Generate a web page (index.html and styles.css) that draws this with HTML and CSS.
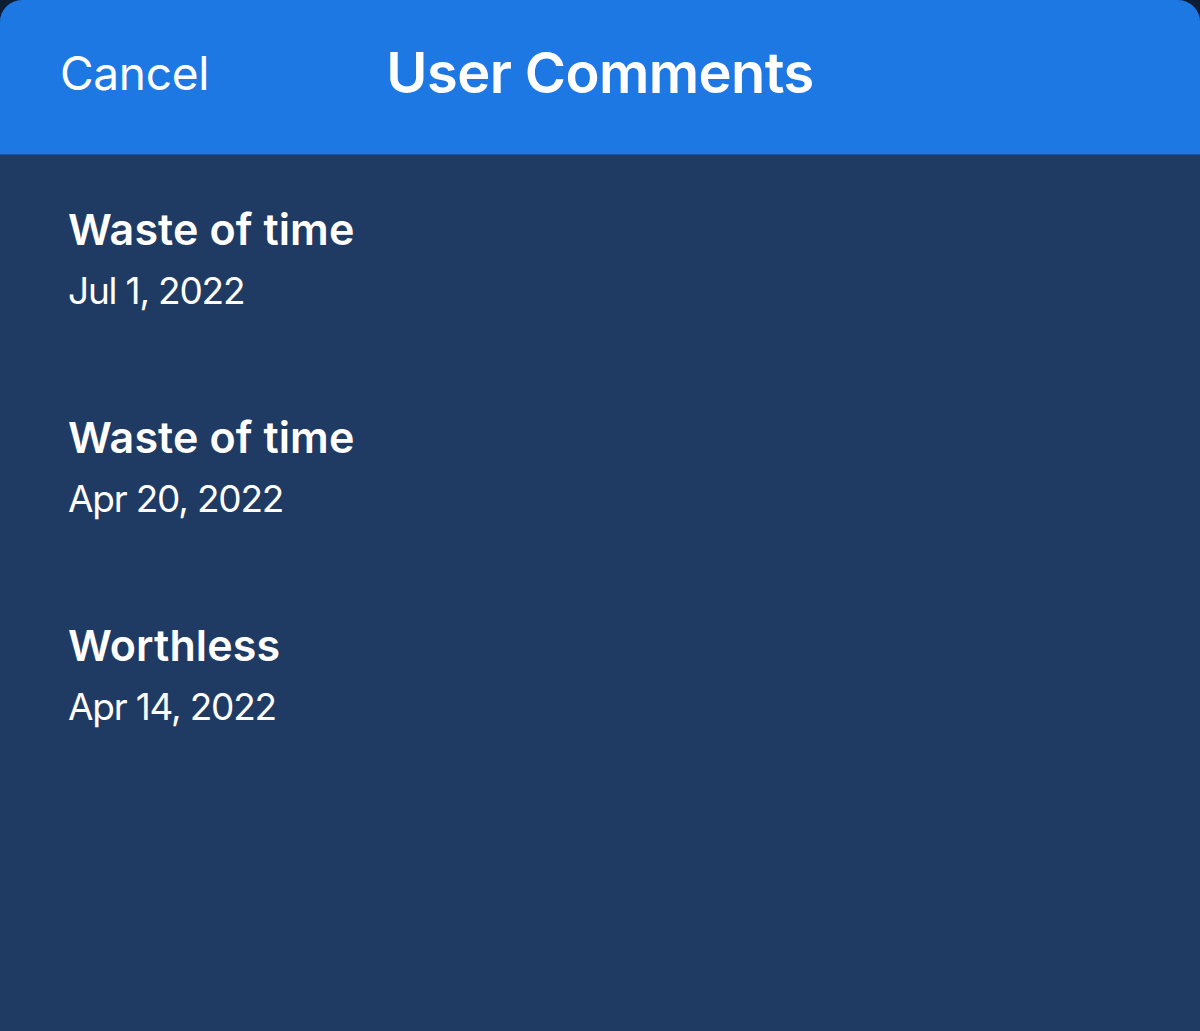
FILE: index.html
```html
<!DOCTYPE html>
<html lang="en">
<head>
    <meta charset="UTF-8">
    <meta name="viewport" content="width=device-width, initial-scale=1.0">
    <title>User Comments</title>
    <link rel="stylesheet" href="styles.css">
</head>
<body>

<div id="sheet">
    <div id="header">
        <div id="cancel">Cancel</div>
        <div id="title">User Comments</div>
        <div></div>
    </div>

    <div id="comments">
        <div class="comment">
            <div class="comment-title">Waste of time</div>
            <div class="comment-date">Jul 1, 2022</div>
        </div>
        <div class="comment">
            <div class="comment-title">Waste of time</div>
            <div class="comment-date">Apr 20, 2022</div>
        </div>
        <div class="comment">
            <div class="comment-title">Worthless</div>
            <div class="comment-date">Apr 14, 2022</div>
        </div>
    </div>
</div>

</body>
</html>
```

FILE: styles.css
```css
body {
    font-family: 'Inter', 'Noto Sans', sans-serif;
    margin: 0;
    padding: 0;
    background-color: #0d1d33;
    overflow: hidden;
}

#sheet {
    height: 1031px;
    background-color: #203b63;
    border-radius: 22px 22px 0 0;
    overflow: hidden;
}

#header {
    height: 155px;
    background-color: #1d78e3;
    border-bottom: 1px solid #1a56a6;
    box-sizing: border-box;
    display: grid;
    grid-template-columns: 1fr auto 1fr;
    align-items: center;
    padding: 0 60px 8px;
    color: white;
}

#cancel {
    font-size: 46px;
    font-weight: 400;
    letter-spacing: -0.3px;
}

#title {
    font-size: 56px;
    font-weight: 600;
    letter-spacing: -0.6px;
}

#comments {
    padding: 44px 68px;
}

.comment {
    height: 208px;
    color: white;
}

.comment-title {
    font-size: 43px;
    font-weight: 600;
    letter-spacing: 0.1px;
    line-height: 60px;
}

.comment-date {
    font-size: 37px;
    font-weight: 400;
    letter-spacing: -1.2px;
    line-height: 56px;
    margin-top: 4px;
}
```
